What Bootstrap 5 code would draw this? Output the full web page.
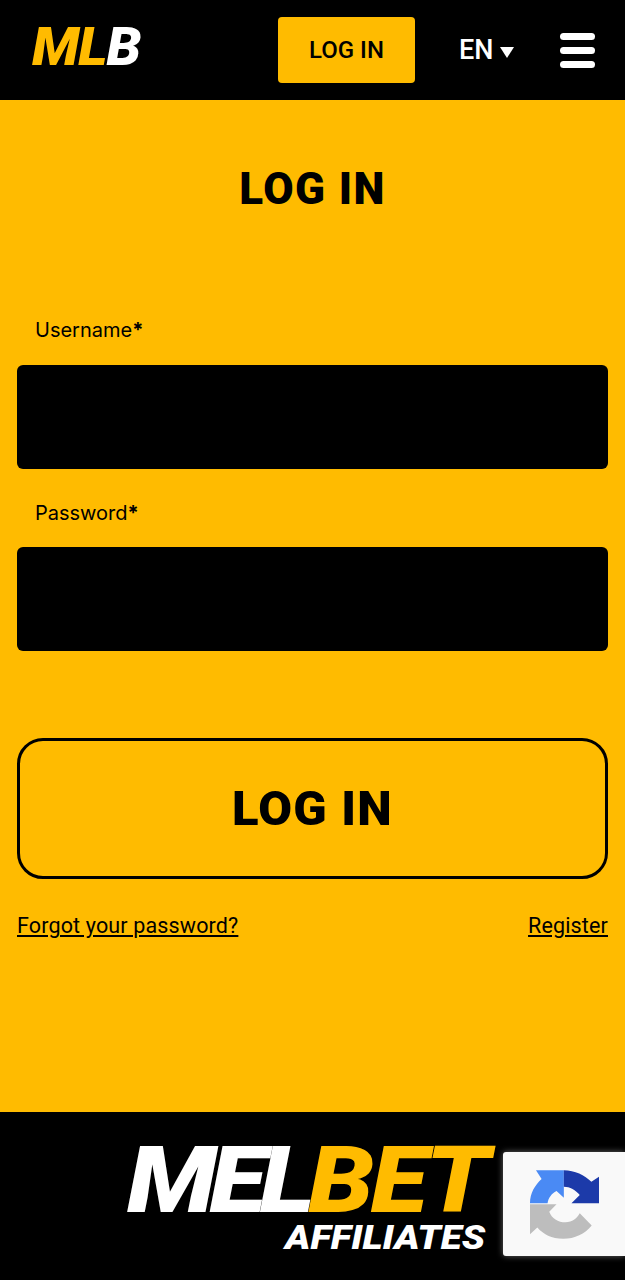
<!DOCTYPE html>
<html lang="en">
<head>
  <meta charset="UTF-8" />
  <meta name="viewport" content="width=device-width, initial-scale=1.0"/>
  <title>Log in</title>
  <link href="https://cdn.jsdelivr.net/npm/bootstrap@5.3.0/dist/css/bootstrap.min.css" rel="stylesheet"/>
  <style>
    body {
      background: #ffbb00;
      color: #000;
      font-family: Roboto, "Liberation Sans", sans-serif;
      height: 1280px;
      overflow: hidden;
    }
    .top-bar {
      background: #000;
      height: 100px;
      padding: 0 30px 0 32px;
    }
    .mlb-logo {
      font-size: 53px;
      font-weight: 900;
      font-style: italic;
      line-height: 1;
      letter-spacing: -1px;
      width: 246px;
      padding-bottom: 6px;
      color: #ffbb00;
      transform: scaleX(1.05);
      transform-origin: left center;
    }
    .mlb-logo span { color: #fff; }
    .top-login {
      background: #ffbb00;
      color: #000;
      border: 0;
      border-radius: 4px;
      width: 137px;
      height: 66px;
      font-size: 24px;
      font-weight: 500;
      padding: 0;
    }
    .top-login:hover { background: #ffbb00; color: #000; }
    .lang-pick {
      color: #fff;
      font-size: 27px;
      font-weight: 500;
      margin-left: 44px;
      width: 101px;
    }
    .lang-arrow {
      width: 0;
      height: 0;
      border-left: 7px solid transparent;
      border-right: 7px solid transparent;
      border-top: 11px solid #fff;
      margin: 5px 0 0 7px;
    }
    .burger { width: 35px; gap: 7px; }
    .burger i { display: block; height: 7px; background: #fff; border-radius: 4px; }

    .login-page { height: 1012px; padding: 0 17px; }
    .login-title {
      font-size: 44px;
      font-weight: 900;
      line-height: 52px;
      padding-top: 63px;
      margin-bottom: 0;
      letter-spacing: 1.4px;
    }
    .field-label {
      font-family: Inter, "Liberation Sans", sans-serif;
      font-size: 20px;
      line-height: 24px;
      padding-left: 18px;
    }
    .label-user { margin: 103px 0 23px; }
    .label-pass { margin: 32px 0 22px; }
    .field-input, .field-input:focus {
      background: #000;
      border: 0;
      border-radius: 6px;
      height: 104px;
      color: #fff;
      box-shadow: none;
    }
    .big-login {
      background: transparent;
      color: #000;
      border: 3px solid #000;
      border-radius: 26px;
      height: 141px;
      font-size: 49px;
      font-weight: 900;
      margin-top: 87px;
      letter-spacing: 1.2px;
    }
    .big-login:hover { background: transparent; color: #000; border-color: #000; }
    .form-links { margin-top: 34px; font-size: 21.5px; line-height: 26px; letter-spacing: .15px; }
    .form-links a { color: #000; }

    .bottom-bar { background: #000; height: 168px; }
    .melbet-logo {
      padding: 31px 0 0 127px;
      font-style: italic;
      font-weight: 900;
      line-height: 1;
    }
    .melbet-main {
      font-size: 93px;
      letter-spacing: -3px;
      color: #ffbb00;
      line-height: 76px;
      width: 380px;
      transform: scaleX(1.13);
      transform-origin: left center;
    }
    .melbet-main span { color: #fff; letter-spacing: -6px; }
    .melbet-sub {
      font-size: 34px;
      color: #fff;
      line-height: 36px;
      margin-left: 158px;
      width: 200px;
      transform: scaleX(1.13);
      transform-origin: left center;
    }
    .captcha-badge {
      position: absolute;
      right: 0;
      top: 1152px;
      width: 122px;
      height: 104px;
      background: #f9f9f9;
      border-radius: 3px 0 0 3px;
      box-shadow: 0 0 6px rgba(128,128,128,.8);
    }
  </style>
</head>
<body class="position-relative">
  <header class="top-bar d-flex align-items-center">
    <div class="mlb-logo">ML<span>B</span></div>
    <button class="btn top-login">LOG IN</button>
    <div class="lang-pick d-flex align-items-center">EN<span class="lang-arrow"></span></div>
    <div class="burger d-flex flex-column"><i></i><i></i><i></i></div>
  </header>

  <main class="login-page">
    <h1 class="login-title text-center">LOG IN</h1>
    <form>
      <label class="field-label label-user d-block">Username<b>*</b></label>
      <input type="text" class="form-control field-input">
      <label class="field-label label-pass d-block">Password<b>*</b></label>
      <input type="password" class="form-control field-input">
      <button type="button" class="btn big-login w-100">LOG IN</button>
      <div class="form-links d-flex justify-content-between">
        <a href="#">Forgot your password?</a>
        <a href="#">Register</a>
      </div>
    </form>
  </main>

  <footer class="bottom-bar">
    <div class="melbet-logo">
      <div class="melbet-main"><span>MEL</span>BET</div>
      <div class="melbet-sub">AFFILIATES</div>
    </div>
  </footer>

  <div class="captcha-badge d-flex align-items-center justify-content-center">
    <svg width="69" height="69" viewBox="90 65 208 207">
      <path d="M90 165 L143 165 C145 150 155 135 170 128 L192 148 L192 65 L108 65 L125 92 C105 110 90 135 90 165Z" fill="#4a8af4"/>
      <path d="M192 65 C225 65 255 80 275 100 L298 85 L298 165 L215 165 L240 140 C228 125 210 115 192 115Z" fill="#1c3aa9"/>
      <path d="M90 168 L170 168 L148 190 C155 210 175 222 197 222 C218 222 230 212 240 195 L276 232 C255 258 225 272 190 272 C155 272 130 258 112 238 L90 258Z" fill="#bdbdbd"/>
    </svg>
  </div>

  <script src="https://cdn.jsdelivr.net/npm/bootstrap@5.3.0/dist/js/bootstrap.bundle.min.js"></script>
</body>
</html>
